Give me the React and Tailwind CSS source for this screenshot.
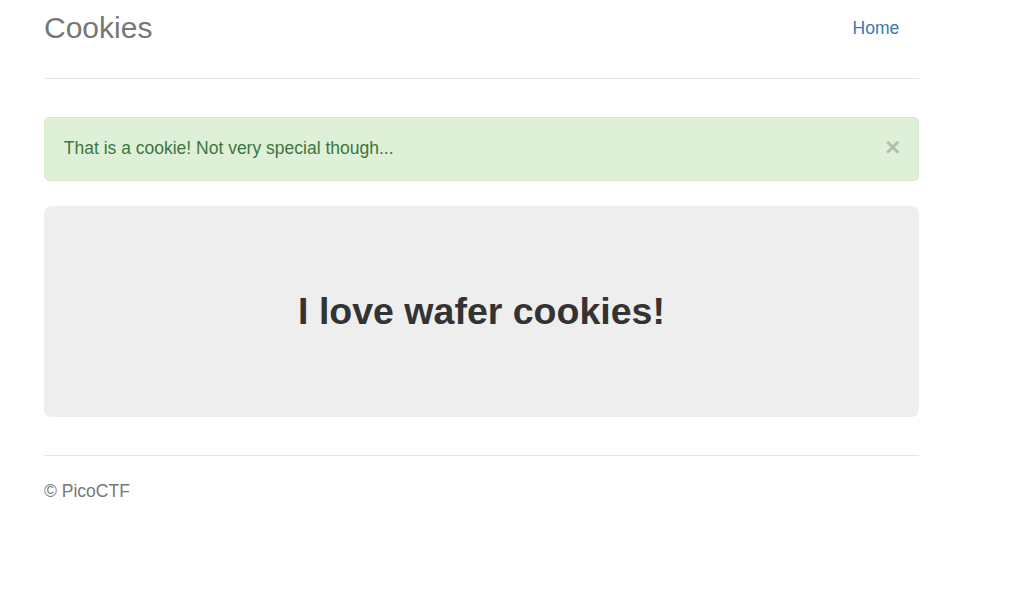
export default function App() {
  return (
    <div className="min-h-[612px] bg-white text-[17.5px] leading-[25px] text-[#333]" style={{ fontFamily: '"Liberation Sans", Arial, Helvetica, sans-serif' }}>
      <div className="ml-[44px] w-[875px] pt-[3px]">
        <header className="flex items-center justify-between border-b-[1.25px] border-[#e5e5e5] pb-[25px]">
          <h3 className="m-0 text-[30px] font-normal leading-[50px] text-[#777]">Cookies</h3>
          <nav>
            <a className="block pb-[12px] pl-[18.75px] pr-[19.75px] pt-[13px] text-[#337ab7]" href="#">Home</a>
          </nav>
        </header>

        <div className="mt-[37.5px] flex items-start rounded-[5px] border-[1.25px] border-[#d6e9c6] bg-[#dff0d8] py-[18.75px] pl-[18.75px] pr-[17.75px] text-[#3c763d]">
          <span className="flex-1">That is a cookie! Not very special though...</span>
          <button className="-mt-[2.5px] text-[26.25px] font-bold leading-none text-black opacity-20">×</button>
        </div>

        <div className="mt-[25px] flex h-[211px] items-center justify-center rounded-[7.5px] bg-[#eeeeee]">
          <h1 className="m-0 text-[37.5px] font-bold leading-[41.25px] text-[#333]">I love wafer cookies!</h1>
        </div>

        <footer className="mt-[38px] border-t-[1.25px] border-[#e5e5e5] pt-[23px] text-[#777]">
          <p className="m-0">© PicoCTF</p>
        </footer>
      </div>
    </div>
  );
}
